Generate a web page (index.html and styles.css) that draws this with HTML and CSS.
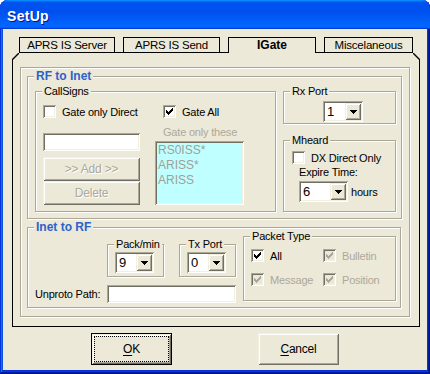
FILE: index.html
```html
<!DOCTYPE html>
<html lang="en">
<head>
    <meta charset="UTF-8">
    <title>SetUp</title>
    <link rel="stylesheet" href="styles.css">
</head>
<body>
    <div class="window">
        <div class="titlebar">SetUp</div>
        <div class="client">
            <div class="tabs">
                <div class="tab">APRS IS Server</div>
                <div class="tab">APRS IS Send</div>
                <div class="tab active">IGate</div>
                <div class="tab">Miscelaneous</div>
            </div>
            <div class="panel">
                <div class="sheet">
                    <!-- RF to Inet -->
                    <div class="group rf">
                        <span class="legend heading">RF to Inet</span>
                        <div class="group callsigns">
                            <span class="legend">CallSigns</span>
                            <div class="check-row">
                                <div class="check direct"><span class="box"></span>Gate only Direct</div>
                                <div class="check">
                                    <span class="box"><svg viewBox="0 0 13 13" width="13" height="13"><path d="M3 5V8H4V9H5V10H6V9H7V8H8V7H9V6H10V3H9V4H8V5H7V6H6V7H5V6H4V5Z"/></svg></span>Gate All
                                </div>
                            </div>
                            <div class="call-row">
                                <div class="call-left">
                                    <div class="edit"></div>
                                    <div class="btn disabled">&gt;&gt; Add &gt;&gt;</div>
                                    <div class="btn disabled">Delete</div>
                                </div>
                                <div class="call-right">
                                    <div class="caption">Gate only these</div>
                                    <div class="listbox">
                                        <div>RS0ISS*</div>
                                        <div>ARISS*</div>
                                        <div>ARISS</div>
                                    </div>
                                </div>
                            </div>
                        </div>
                        <div class="side">
                            <div class="group rxport">
                                <span class="legend">Rx Port</span>
                                <div class="combo small">
                                    <span class="val">1</span>
                                    <span class="drop"><svg viewBox="0 0 7 4" width="7" height="4"><path d="M0 0H7V1H6V2H5V3H4V4H3V3H2V2H1V1H0Z"/></svg></span>
                                </div>
                            </div>
                            <div class="group mheard">
                                <span class="legend">Mheard</span>
                                <div class="check"><span class="box"></span>DX Direct Only</div>
                                <div class="expire">Expire Time:</div>
                                <div class="hours-row">
                                    <div class="combo wide">
                                        <span class="val">6</span>
                                        <span class="drop"><svg viewBox="0 0 7 4" width="7" height="4"><path d="M0 0H7V1H6V2H5V3H4V4H3V3H2V2H1V1H0Z"/></svg></span>
                                    </div>
                                    <span class="hours">hours</span>
                                </div>
                            </div>
                        </div>
                    </div>

                    <!-- Inet to RF -->
                    <div class="group inet">
                        <span class="legend heading">Inet to RF</span>
                        <div class="inet-left">
                            <div class="ports">
                                <div class="group port">
                                    <span class="legend">Pack/min</span>
                                    <div class="combo small">
                                        <span class="val">9</span>
                                        <span class="drop"><svg viewBox="0 0 7 4" width="7" height="4"><path d="M0 0H7V1H6V2H5V3H4V4H3V3H2V2H1V1H0Z"/></svg></span>
                                    </div>
                                </div>
                                <div class="group port">
                                    <span class="legend">Tx Port</span>
                                    <div class="combo small">
                                        <span class="val">0</span>
                                        <span class="drop"><svg viewBox="0 0 7 4" width="7" height="4"><path d="M0 0H7V1H6V2H5V3H4V4H3V3H2V2H1V1H0Z"/></svg></span>
                                    </div>
                                </div>
                            </div>
                            <div class="path-row">
                                <span class="path-label">Unproto Path:</span>
                                <div class="edit path"></div>
                            </div>
                        </div>
                        <div class="group ptype">
                            <span class="legend">Packet Type</span>
                            <div class="check">
                                <span class="box"><svg viewBox="0 0 13 13" width="13" height="13"><path d="M3 5V8H4V9H5V10H6V9H7V8H8V7H9V6H10V3H9V4H8V5H7V6H6V7H5V6H4V5Z"/></svg></span>All
                            </div>
                            <div class="check disabled">
                                <span class="box"><svg viewBox="0 0 13 13" width="13" height="13"><path d="M3 5V8H4V9H5V10H6V9H7V8H8V7H9V6H10V3H9V4H8V5H7V6H6V7H5V6H4V5Z"/></svg></span>Bulletin
                            </div>
                            <div class="check disabled">
                                <span class="box"><svg viewBox="0 0 13 13" width="13" height="13"><path d="M3 5V8H4V9H5V10H6V9H7V8H8V7H9V6H10V3H9V4H8V5H7V6H6V7H5V6H4V5Z"/></svg></span>Message
                            </div>
                            <div class="check disabled">
                                <span class="box"><svg viewBox="0 0 13 13" width="13" height="13"><path d="M3 5V8H4V9H5V10H6V9H7V8H8V7H9V6H10V3H9V4H8V5H7V6H6V7H5V6H4V5Z"/></svg></span>Position
                            </div>
                        </div>
                    </div>
                </div>
            </div>
            <div class="buttons">
                <div class="dlg-btn default"><span class="focus"><u>O</u>K</span></div>
                <div class="dlg-btn"><span><u>C</u>ancel</span></div>
            </div>
        </div>
    </div>
</body>
</html>
```

FILE: styles.css
```css
* {
    box-sizing: border-box;
}

body {
    margin: 0;
    background: #fff;
    color: #000;
    font-family: "Liberation Sans", Arial, sans-serif;
    font-size: 11px;
    letter-spacing: -0.2px;
}

.window {
    width: 430px;
    height: 374px;
    display: flex;
    flex-direction: column;
    background: #0831d9;
    border-radius: 8px 8px 0 0;
    overflow: hidden;
    box-shadow: inset -1px -1px #00138c, inset 1px 1px #0831d9, inset -2px -2px #001ea0, inset 2px 2px #166aee, inset -3px -3px #003bda, inset 3px 3px #0855dd;
}

.titlebar {
    flex: none;
    height: 29px;
    padding: 8px 0 0 7px;
    color: #fff;
    font: bold 14px/16px "Liberation Sans", Arial, sans-serif;
    letter-spacing: 0.3px;
    text-shadow: 1px 1px #0f1089;
    background: linear-gradient(180deg, #0997ff, #0053ee 8%, #0050ee 40%, #06f 88%, #06f 93%, #005bff 95%, #003dd7 96%, #003dd7);
}

.client {
    flex: 1;
    margin: 0 3px 4px;
    padding: 8px 0 0 9px;
    background: #ece9d8;
}

/* tabs */
.tabs {
    display: flex;
    gap: 8px;
    width: 394px;
    height: 16px;
    margin-left: 7px;
    border-bottom: 1px solid #000;
}

.tab {
    height: 15px;
    border: 1px solid #000;
    border-bottom: none;
    text-align: center;
    font-size: 11.5px;
    line-height: 14px;
    white-space: nowrap;
}

.tab:nth-child(1) { width: 96px; }
.tab:nth-child(2) { width: 97px; }
.tab:nth-child(3) { width: 88px; }
.tab:nth-child(4) { width: 89px; }

.tab.active {
    height: 16px;
    background: #ece9d8;
    font: bold 12px/14px "Liberation Sans", Arial, sans-serif;
    letter-spacing: 0;
}

.panel {
    position: relative;
    width: 408px;
    height: 274px;
    padding: 14px 0 0 7px;
    border: 1px solid #000;
    border-top: none;
}

.panel::before,
.panel::after {
    content: "";
    position: absolute;
    top: 0;
    width: 7px;
    height: 7px;
}

.panel::before {
    left: -1px;
    background: linear-gradient(to bottom right, #ece9d8 calc(50% - 0.9px), #000 calc(50% - 0.5px), #000 calc(50% + 0.5px), #ece9d8 calc(50% + 0.9px));
}

.panel::after {
    right: -1px;
    background: linear-gradient(to bottom left, #ece9d8 calc(50% - 0.9px), #000 calc(50% - 0.5px), #000 calc(50% + 0.5px), #ece9d8 calc(50% + 0.9px));
}

.sheet {
    width: 390px;
    height: 250px;
    padding: 8px 0 0 6px;
    border: 1px solid #aca899;
    box-shadow: inset 1px 1px #fff, 1px 1px #fff;
}

/* group boxes */
.group {
    position: relative;
    border: 1px solid #aca899;
    box-shadow: inset 1px 1px #fff, 1px 1px #fff;
}

.legend {
    position: absolute;
    top: -8px;
    left: 6px;
    padding: 0 2px;
    background: #ece9d8;
    line-height: 14px;
    white-space: nowrap;
}

.legend.heading {
    color: #2b62cc;
    font: bold 12px/14px "Liberation Sans", Arial, sans-serif;
    letter-spacing: 0;
}

.rf {
    display: flex;
    gap: 7px;
    width: 375px;
    height: 143px;
    padding: 14px 5px 6px 7px;
}

.callsigns {
    width: 241px;
    height: 121px;
    padding: 13px 0 0 7px;
}

.check-row {
    display: flex;
}

.check-row .direct {
    width: 120px;
}

.call-row {
    display: flex;
    gap: 15px;
    margin-top: 7px;
}

.call-left {
    width: 97px;
    padding-top: 8px;
}

.call-left .edit {
    margin-bottom: 6px;
}

.call-right {
    width: 89px;
}

.caption {
    height: 16px;
    padding-left: 8px;
    line-height: 15px;
    color: #aca899;
    white-space: nowrap;
}

.listbox {
    height: 64px;
    padding: 2px 3px;
    background: #bfffff;
    color: #a09f98;
    font: 12px/15px "Liberation Sans", Arial, sans-serif;
    letter-spacing: 0;
    box-shadow: inset 1px 1px #aca899, inset -1px -1px #fff, inset 2px 2px #716f64, inset -2px -2px #f1efe2;
}

.side {
    display: flex;
    flex-direction: column;
    gap: 16px;
    width: 113px;
}

.rxport {
    height: 33px;
    padding: 9px 0 0 39px;
}

.mheard {
    height: 72px;
    padding: 10px 0 0 8px;
}

.expire {
    margin: 1px 0 0 7px;
    line-height: 14px;
}

.hours-row {
    display: flex;
    align-items: center;
    margin: 2px 0 0 7px;
}

.hours {
    margin-left: 3px;
}

/* inet to rf */
.inet {
    display: flex;
    gap: 7px;
    width: 374px;
    height: 81px;
    margin-top: 8px;
    padding: 8px 4px 0 7px;
}

.inet-left {
    width: 201px;
    padding-top: 8px;
}

.ports {
    display: flex;
    gap: 15px;
    margin-left: 72px;
}

.port {
    width: 57px;
    height: 33px;
    padding: 7px 0 0 7px;
}

.path-row {
    display: flex;
    align-items: center;
    margin-top: 8px;
}

.path-label {
    width: 72px;
    white-space: nowrap;
}

.edit.path {
    width: 129px;
}

.ptype {
    display: grid;
    grid-template-columns: 72px auto;
    row-gap: 11px;
    align-content: start;
    width: 153px;
    height: 65px;
    padding: 12px 0 0 7px;
}

/* controls */
.check {
    display: flex;
    align-items: center;
    height: 13px;
    white-space: nowrap;
}

.box {
    flex: none;
    width: 13px;
    height: 13px;
    margin-right: 6px;
    background: #fff;
    box-shadow: inset 1px 1px #aca899, inset -1px -1px #fff, inset 2px 2px #716f64, inset -2px -2px #f1efe2;
}

.box svg {
    display: block;
    fill: #000;
    shape-rendering: crispEdges;
}

.check.disabled {
    color: #aca899;
}

.check.disabled .box {
    background: #ece9d8;
}

.check.disabled svg {
    fill: #aca899;
}

.edit {
    height: 18px;
    background: #fff;
    box-shadow: inset 1px 1px #aca899, inset -1px -1px #fff, inset 2px 2px #716f64, inset -2px -2px #f1efe2;
}

.combo {
    display: flex;
    height: 21px;
    padding: 2px;
    background: #fff;
    box-shadow: inset 1px 1px #aca899, inset -1px -1px #fff, inset 2px 2px #716f64, inset -2px -2px #f1efe2;
}

.combo.small {
    width: 39px;
}

.rxport .combo.small {
    width: 40px;
}

.combo.wide {
    width: 49px;
}

.combo .val {
    flex: 1;
    padding-left: 2px;
    font: 13px/17px "Liberation Sans", Arial, sans-serif;
    letter-spacing: 0;
}

.combo .drop {
    display: flex;
    align-items: center;
    justify-content: center;
    width: 16px;
    background: #ece9d8;
    box-shadow: inset 1px 1px #f1efe2, inset -1px -1px #716f64, inset 2px 2px #fff, inset -2px -2px #aca899;
}

.drop svg {
    display: block;
    shape-rendering: crispEdges;
}

.btn {
    height: 24px;
    text-align: center;
    line-height: 24px;
    font-size: 12px;
    background: #ece9d8;
    box-shadow: inset 1px 1px #f1efe2, inset -1px -1px #716f64, inset 2px 2px #fff, inset -2px -2px #aca899;
}

.btn.disabled {
    color: #aca899;
    text-shadow: 1px 1px #fff;
}

/* dialog buttons */
.buttons {
    display: flex;
    gap: 86px;
    margin-top: 6px;
    padding-left: 79px;
}

.dlg-btn {
    display: flex;
    width: 81px;
    height: 32px;
    padding: 3px;
    font-size: 12px;
    background: #ece9d8;
    box-shadow: inset 1px 1px #f1efe2, inset -1px -1px #716f64, inset 2px 2px #fff, inset -2px -2px #aca899;
}

.dlg-btn span {
    flex: 1;
    display: flex;
    align-items: center;
    justify-content: center;
    padding-bottom: 1px;
}

.dlg-btn.default {
    border: 1px solid #000;
    padding: 2px;
}

.dlg-btn .focus {
    border: 1px dotted #000;
}

u {
    text-decoration-thickness: 1px;
    text-underline-offset: 2px;
}
```
